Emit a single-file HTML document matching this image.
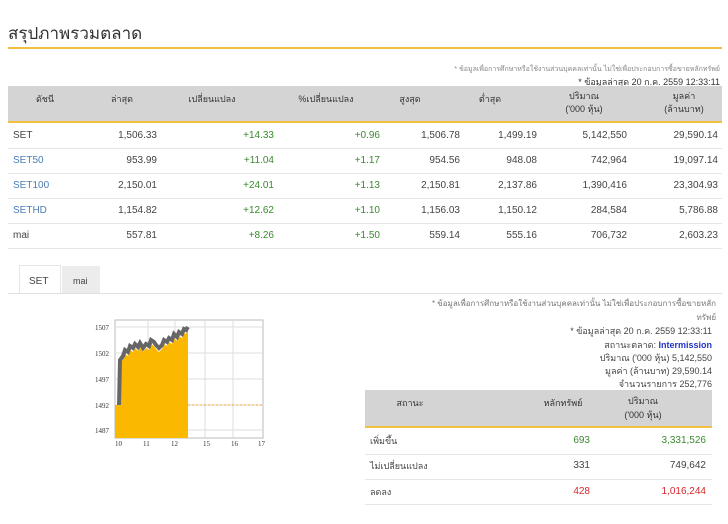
<!DOCTYPE html>
<html><head><meta charset="utf-8"><style>
body{margin:0;width:728px;height:524px;background:#fff;font-family:"Liberation Sans","Noto Sans CJK SC",sans-serif;color:#444;position:relative;overflow:hidden}
.a{position:absolute;white-space:nowrap;font-size:10px}
.r{text-align:right}
.c{text-align:center}
.g{color:#3a8a2e}.red{color:#d9262b}.b{color:#4a7fb5}
</style></head><body>
<div class="a" style="left:8px;top:20px;font-size:17px;color:#333">สรุปภาพรวมตลาด</div>
<div style="position:absolute;left:8px;top:47px;width:714px;height:2px;background:#f1c040"></div>
<div class="a r" style="right:8px;top:64px;font-size:7px;color:#888">* ข้อมูลเพื่อการศึกษาหรือใช้งานส่วนบุคคลเท่านั้น ไม่ใช่เพื่อประกอบการซื้อขายหลักทรัพย์</div>
<div class="a r" style="right:8px;top:75px;font-size:9px;color:#333">* ข้อมูลล่าสุด 20 ก.ค. 2559 12:33:11</div>
<div style="position:absolute;left:8px;top:86px;width:714px;height:35px;background:#d4d4d4;border-bottom:2px solid #f1c040"></div>
<div class="a c" style="left:25px;width:40px;top:92px;font-size:9px;color:#333">ดัชนี</div>
<div class="a c" style="left:97px;width:50px;top:92px;font-size:9px;color:#333">ล่าสุด</div>
<div class="a c" style="left:180px;width:64px;top:92px;font-size:9px;color:#333">เปลี่ยนแปลง</div>
<div class="a c" style="left:290px;width:72px;top:92px;font-size:9px;color:#333">%เปลี่ยนแปลง</div>
<div class="a c" style="left:390px;width:40px;top:92px;font-size:9px;color:#333">สูงสุด</div>
<div class="a c" style="left:470px;width:40px;top:92px;font-size:9px;color:#333">ต่ำสุด</div>
<div class="a c" style="left:554px;width:60px;top:90px;font-size:9px;color:#333;line-height:13px">ปริมาณ<br>('000 หุ้น)</div>
<div class="a c" style="left:654px;width:60px;top:90px;font-size:9px;color:#333;line-height:13px">มูลค่า<br>(ล้านบาท)</div>
<div style="position:absolute;left:8px;top:124px;width:714px">
<div style="position:relative;height:24px;border-bottom:1px solid #e6e6e6">
<span class="a" style="left:5px;top:6px">SET</span><span class="a r" style="right:565px;top:6px">1,506.33</span><span class="a r g" style="right:448px;top:6px">+14.33</span><span class="a r g" style="right:342px;top:6px">+0.96</span><span class="a r" style="right:262px;top:6px">1,506.78</span><span class="a r" style="right:185px;top:6px">1,499.19</span><span class="a r" style="right:95px;top:6px">5,142,550</span><span class="a r" style="right:4px;top:6px">29,590.14</span></div>
<div style="position:relative;height:24px;border-bottom:1px solid #e6e6e6">
<span class="a b" style="left:5px;top:6px">SET50</span><span class="a r" style="right:565px;top:6px">953.99</span><span class="a r g" style="right:448px;top:6px">+11.04</span><span class="a r g" style="right:342px;top:6px">+1.17</span><span class="a r" style="right:262px;top:6px">954.56</span><span class="a r" style="right:185px;top:6px">948.08</span><span class="a r" style="right:95px;top:6px">742,964</span><span class="a r" style="right:4px;top:6px">19,097.14</span></div>
<div style="position:relative;height:24px;border-bottom:1px solid #e6e6e6">
<span class="a b" style="left:5px;top:6px">SET100</span><span class="a r" style="right:565px;top:6px">2,150.01</span><span class="a r g" style="right:448px;top:6px">+24.01</span><span class="a r g" style="right:342px;top:6px">+1.13</span><span class="a r" style="right:262px;top:6px">2,150.81</span><span class="a r" style="right:185px;top:6px">2,137.86</span><span class="a r" style="right:95px;top:6px">1,390,416</span><span class="a r" style="right:4px;top:6px">23,304.93</span></div>
<div style="position:relative;height:24px;border-bottom:1px solid #e6e6e6">
<span class="a b" style="left:5px;top:6px">SETHD</span><span class="a r" style="right:565px;top:6px">1,154.82</span><span class="a r g" style="right:448px;top:6px">+12.62</span><span class="a r g" style="right:342px;top:6px">+1.10</span><span class="a r" style="right:262px;top:6px">1,156.03</span><span class="a r" style="right:185px;top:6px">1,150.12</span><span class="a r" style="right:95px;top:6px">284,584</span><span class="a r" style="right:4px;top:6px">5,786.88</span></div>
<div style="position:relative;height:24px;border-bottom:1px solid #e6e6e6">
<span class="a" style="left:5px;top:6px">mai</span><span class="a r" style="right:565px;top:6px">557.81</span><span class="a r g" style="right:448px;top:6px">+8.26</span><span class="a r g" style="right:342px;top:6px">+1.50</span><span class="a r" style="right:262px;top:6px">559.14</span><span class="a r" style="right:185px;top:6px">555.16</span><span class="a r" style="right:95px;top:6px">706,732</span><span class="a r" style="right:4px;top:6px">2,603.23</span></div>
</div>
<div style="position:absolute;left:19px;top:265px;width:40px;height:28px;border:1px solid #e6e6e6;border-bottom:none;background:#fff"></div>
<div class="a" style="left:29px;top:276px">SET</div>
<div style="position:absolute;left:62px;top:266px;width:38px;height:27px;background:#ececec"></div>
<div class="a" style="left:73px;top:276px;font-size:9px">mai</div>
<div style="position:absolute;left:8px;top:293px;width:714px;height:1px;background:#e0e0e0"></div>
<svg style="position:absolute;left:80px;top:315px" width="200" height="135" viewBox="80 315 200 135">
<rect x="115" y="320" width="148" height="118" fill="#fff" stroke="#bbb"/>
<g stroke="#ddd" stroke-width="1">
<line x1="148" y1="320" x2="148" y2="438"/><line x1="175" y1="320" x2="175" y2="438"/><line x1="205" y1="320" x2="205" y2="438"/><line x1="233" y1="320" x2="233" y2="438"/>
<line x1="115" y1="327" x2="263" y2="327"/><line x1="115" y1="353" x2="263" y2="353"/><line x1="115" y1="379" x2="263" y2="379"/><line x1="115" y1="405" x2="263" y2="405"/><line x1="115" y1="430" x2="263" y2="430"/>
</g>
<line x1="188" y1="405" x2="263" y2="405" stroke="#f0a030" stroke-dasharray="2,2"/>
<path d="M115,405 L119,405 L120,362 L123,360 L125,354 L128,356 L130,350 L133,352 L135,348 L138,351 L140,347 L143,352 L146,348 L149,350 L151,344 L154,346 L156,349 L159,352 L162,349 L164,344 L167,346 L169,342 L172,344 L174,338 L177,341 L179,336 L182,338 L184,333 L186,334 L188,330 L188,438 L115,438 Z" fill="#fbb800"/>
<path d="M119,405 L120,360 L123,356 L125,350 L128,352 L130,346 L133,348 L135,344 L138,347 L140,343 L143,348 L146,344 L149,346 L151,340 L154,342 L156,345 L159,348 L162,345 L164,340 L167,342 L169,338 L172,340 L174,334 L177,337 L179,332 L182,334 L184,329 L186,330 L188,327" fill="none" stroke="#666" stroke-width="4"/>
<g font-size="7" fill="#333" font-family="Liberation Serif,serif">
<text x="95" y="330">1507</text><text x="95" y="356">1502</text><text x="95" y="382">1497</text><text x="95" y="408">1492</text><text x="95" y="433">1487</text>
<text x="115" y="446">10</text><text x="143" y="446">11</text><text x="171" y="446">12</text><text x="203" y="446">15</text><text x="231" y="446">16</text><text x="258" y="446">17</text>
</g></svg>
<div class="a r" style="right:12px;top:297px;font-size:8px;color:#777">* ข้อมูลเพื่อการศึกษาหรือใช้งานส่วนบุคคลเท่านั้น ไม่ใช่เพื่อประกอบการซื้อขายหลัก</div>
<div class="a r" style="right:12px;top:311px;font-size:8px;color:#777">ทรัพย์</div>
<div class="a r" style="right:16px;top:324px;font-size:9px">* ข้อมูลล่าสุด 20 ก.ค. 2559 12:33:11</div>
<div class="a r" style="right:16px;top:338px;font-size:9px">สถานะตลาด: <b style="color:#2233cc">Intermission</b></div>
<div class="a r" style="right:16px;top:351px;font-size:9px">ปริมาณ ('000 หุ้น) 5,142,550</div>
<div class="a r" style="right:16px;top:364px;font-size:9px">มูลค่า (ล้านบาท) 29,590.14</div>
<div class="a r" style="right:16px;top:377px;font-size:9px">จำนวนรายการ 252,776</div>
<div style="position:absolute;left:365px;top:390px;width:347px;height:36px;background:#d4d4d4;border-bottom:2px solid #f1c040"></div>
<div class="a c" style="left:385px;width:50px;top:396px;font-size:9px;color:#333">สถานะ</div>
<div class="a c" style="left:530px;width:66px;top:396px;font-size:9px;color:#333">หลักทรัพย์</div>
<div class="a c" style="left:610px;width:66px;top:394px;font-size:9px;color:#333;line-height:14px">ปริมาณ<br>('000 หุ้น)</div>
<div style="position:absolute;left:365px;top:454px;width:347px;height:1px;background:#e6e6e6"></div>
<div style="position:absolute;left:365px;top:479px;width:347px;height:1px;background:#e6e6e6"></div>
<div style="position:absolute;left:365px;top:504px;width:347px;height:1px;background:#e6e6e6"></div>
<div class="a" style="left:370px;top:434px;font-size:9px">เพิ่มขึ้น</div><div class="a r g" style="right:138px;top:435px">693</div><div class="a r g" style="right:22px;top:435px">3,331,526</div>
<div class="a" style="left:370px;top:459px;font-size:9px">ไม่เปลี่ยนแปลง</div><div class="a r" style="right:138px;top:460px">331</div><div class="a r" style="right:22px;top:460px">749,642</div>
<div class="a" style="left:370px;top:485px;font-size:9px">ลดลง</div><div class="a r red" style="right:138px;top:486px">428</div><div class="a r red" style="right:22px;top:486px">1,016,244</div>
</body></html>
